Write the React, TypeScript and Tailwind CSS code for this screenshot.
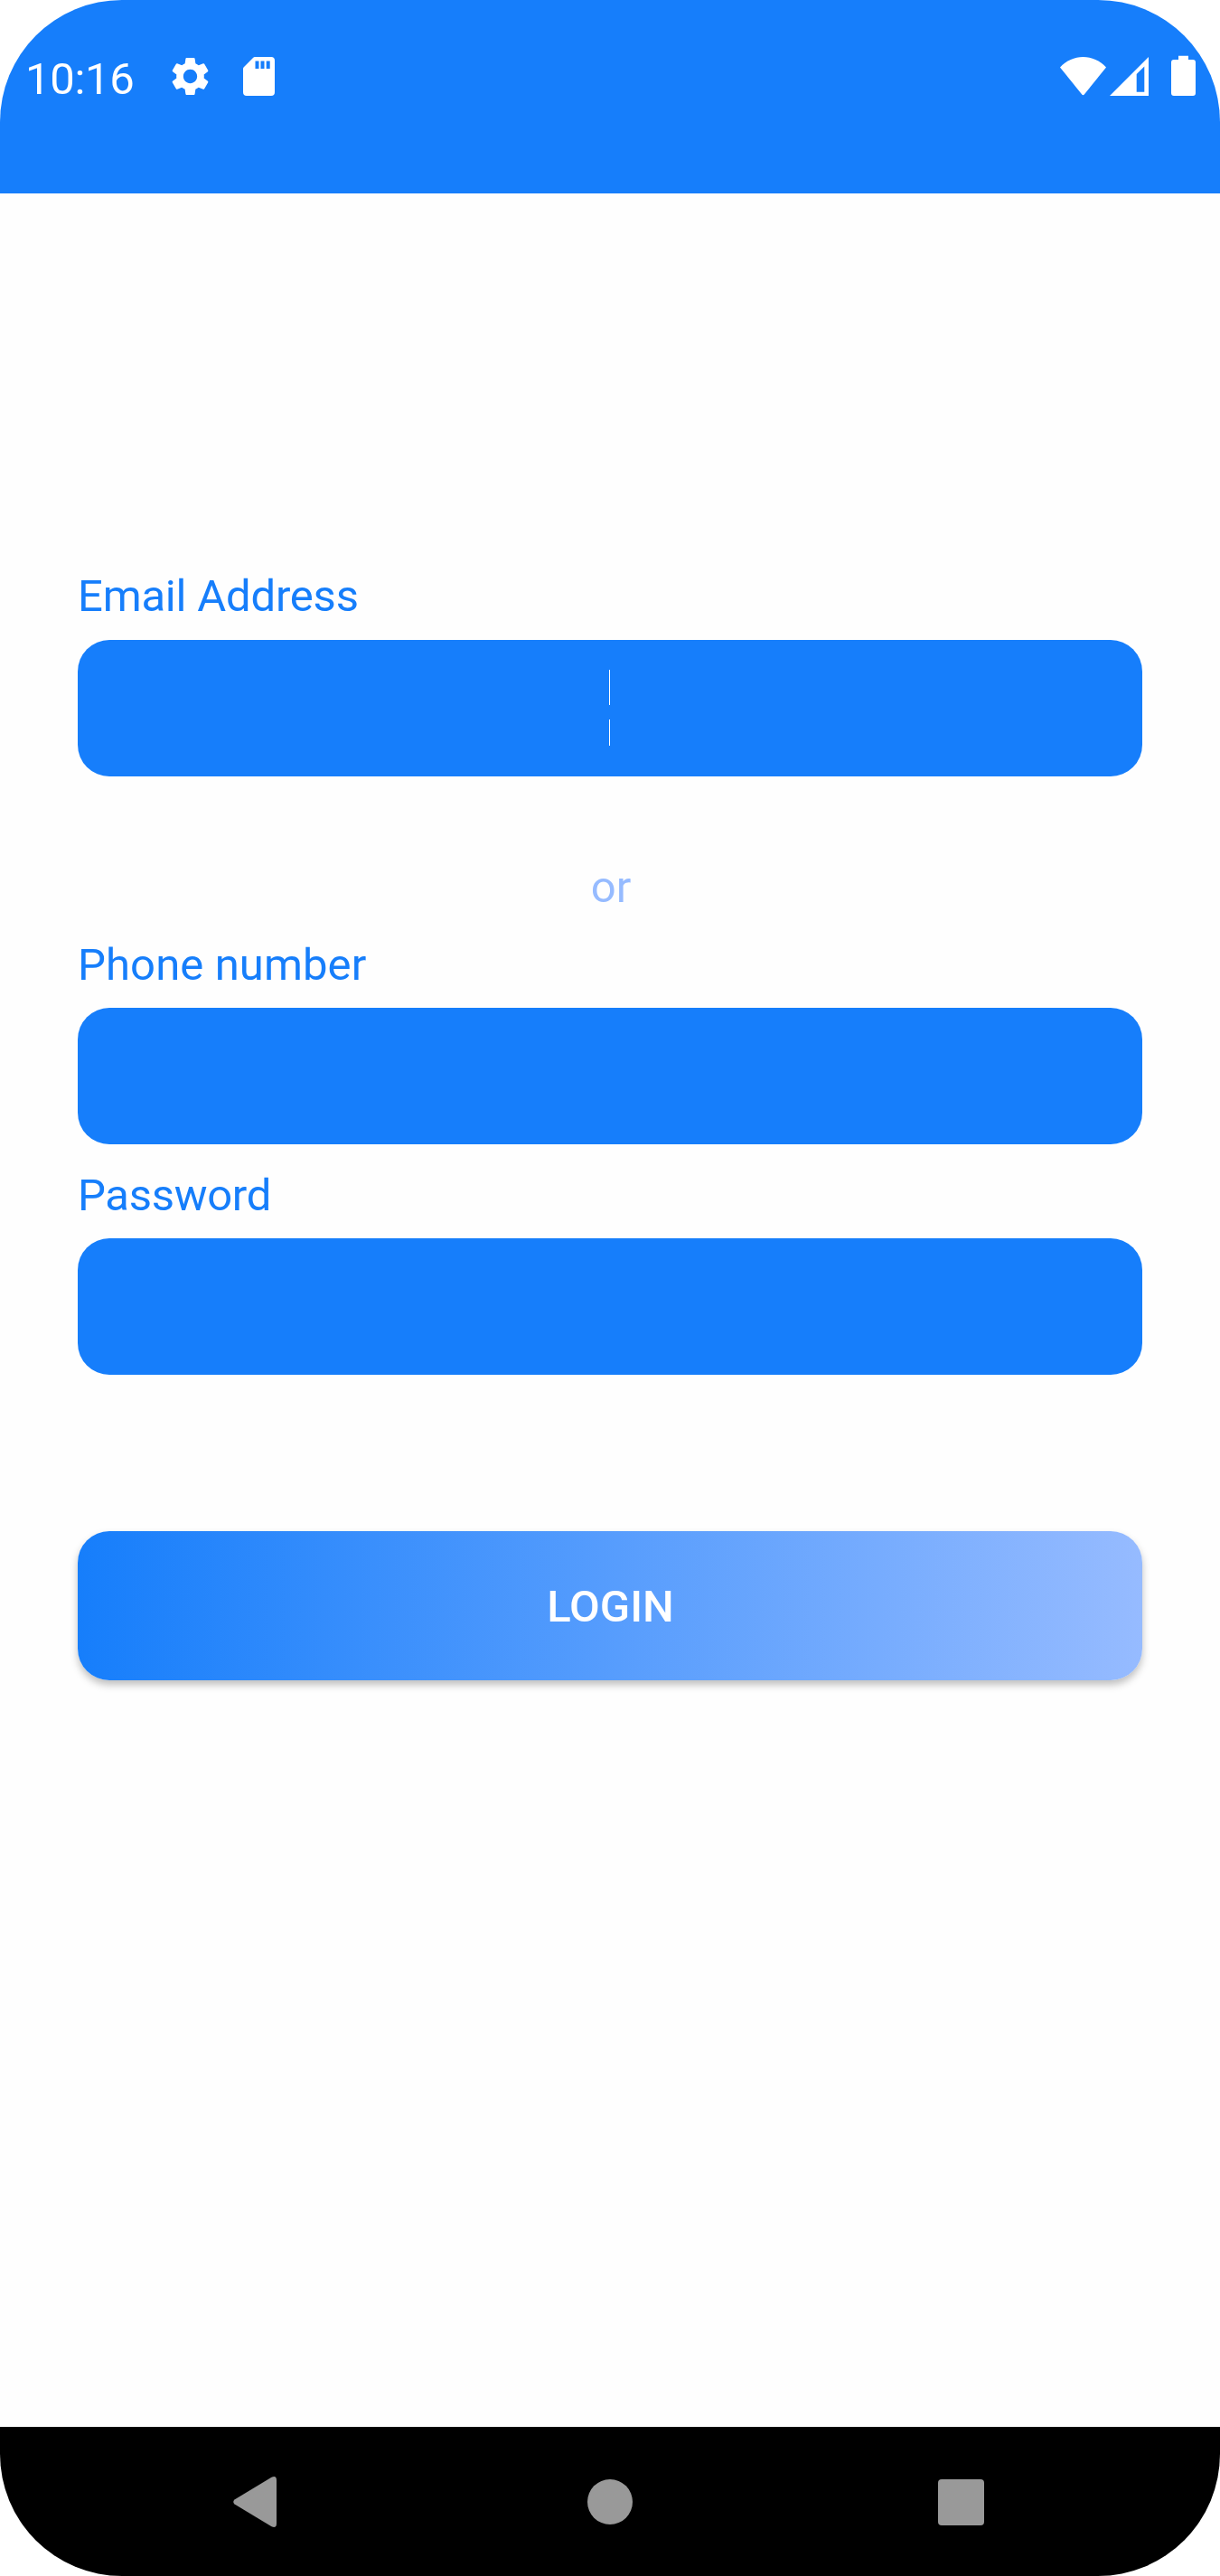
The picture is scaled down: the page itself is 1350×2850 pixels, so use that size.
import React from "react";
import { MdSettings } from "react-icons/md";

function StatusBar() {
  return (
    <header className="flex h-[214px] items-start justify-between bg-[#167efb] text-white">
      <div className="flex items-start pl-[27px] pt-[58px]">
        <span className="mt-px w-[121px] whitespace-nowrap pl-px text-[49px] leading-[58px] tracking-[-0.3px]">10:16</span>
        <MdSettings className="ml-[37px] mt-px size-[51px]" />
        <svg className="ml-[33px] mt-[5px] h-[43px] w-[35px]" viewBox="0 0 35 43" fill="currentColor">
          <path
            fillRule="evenodd"
            d="M13 0H31Q35 0 35 4V39Q35 43 31 43H4Q0 43 0 39V13Q0 12 1 11L11 1Q12 0 13 0ZM13.5 4.5V13H17.5V4.5ZM19.5 4.5V13H23.5V4.5ZM25.7 4.5V13H29.7V4.5Z"
          />
        </svg>
      </div>
      <div className="flex items-end pr-[27px] pt-[61px]">
        <svg className="h-[43px] w-[51px]" viewBox="0 0 51 43" fill="currentColor">
          <path d="M0 11.5C7 4 16 0 25.5 0S44 4 51 11.5L26.8 41.5Q25.5 43 24.2 41.5Z" />
        </svg>
        <svg className="ml-1 h-[43px] w-[43px]" viewBox="0 0 43 43" fill="currentColor">
          <path fillRule="evenodd" d="M43 0V43H0ZM38.3 10.5L29.7 19V38.7H38.3Z" />
        </svg>
        <svg className="ml-[25px] h-[45px] w-[27px]" viewBox="0 0 27 45" fill="currentColor">
          <path d="M8 .7H19V5H24Q27 5 27 8V42Q27 45 24 45H3Q0 45 0 42V8Q0 5 3 5H8Z" />
        </svg>
      </div>
    </header>
  );
}

function Field({ label, className, children }: { label: string; className?: string; children?: React.ReactNode }) {
  return (
    <div className={className}>
      <div className="text-[49px] leading-[58px] text-[#167efb]">{label}</div>
      <div className="h-[151px] rounded-[35px] bg-[#167efb]">{children}</div>
    </div>
  );
}

function NavBar() {
  return (
    <nav className="flex h-[165px] items-center bg-black text-[#999999]">
      <svg className="ml-[258px] h-[56px] w-[48px]" viewBox="0 0 48 56" fill="currentColor">
        <path d="M1.5 25.5L42.5 .8Q48 -1.5 48 4V52Q48 57.5 42.5 55.2L1.5 30.5Q-1 28 1.5 25.5Z" />
      </svg>
      <div className="ml-[344px] size-[50px] rounded-full bg-[#999999]" />
      <div className="ml-[338px] mt-px size-[51px] rounded-[4px] bg-[#999999]" />
    </nav>
  );
}

export default function App() {
  return (
    <div className="h-[2850px] w-[1350px] bg-white">
      <div className="flex h-full flex-col overflow-hidden rounded-[135px] bg-[#fefefe] font-['Roboto',sans-serif]">
        <StatusBar />
        <main className="flex grow flex-col px-[86px] pt-[417px]">
          <Field label="Email Address" className="flex flex-col gap-[19px] tracking-[-0.2px]">
            <div className="flex flex-col items-start pl-[588px] pt-[33px]">
              <div className="h-[39px] w-px bg-white" />
              <div className="mt-4 h-[29px] w-px bg-white" />
            </div>
          </Field>
          <div className="mt-[94px] h-[58px] pl-0.5 text-center text-[49px] leading-[58px] text-[#96bbff]">or</div>
          <Field label="Phone number" className="mt-7 flex flex-col gap-[18px] tracking-[0.1px]" />
          <Field label="Password" className="mt-7 flex flex-col gap-[18px] tracking-[-0.3px]" />
          <button className="mt-[173px] h-[165px] shrink-0 rounded-[35px] bg-linear-to-r/srgb from-[#167efb] to-[#96bbff] pl-px pt-[3px] text-[49px] font-medium leading-[58px] text-white shadow-[0_5px_8px_rgba(0,0,0,0.25)]">
            LOGIN
          </button>
        </main>
        <NavBar />
      </div>
    </div>
  );
}
